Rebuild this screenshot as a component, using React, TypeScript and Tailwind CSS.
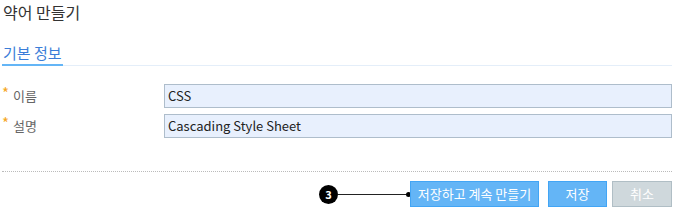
import { ReactNode } from 'react'

const font = { fontFamily: '"Noto Sans CJK KR", "Noto Sans", sans-serif' }

function Row({ label, value }: { label: string; value: string }) {
  return (
    <div className="flex items-center h-[24px]">
      <div className="w-[162px] flex items-center text-[13px] text-[#666]">
        <span className="text-[#f5a623] text-[15px] leading-none w-[11px] -mt-[7px]">*</span>
        <span>{label}</span>
      </div>
      <div className="flex-1 h-[24px] border border-[#aebdcb] bg-[#e8f0fd] flex items-center px-[3px] text-[13px] text-[#222]">
        {value}
      </div>
    </div>
  )
}

function Btn({ children, variant = 'primary', w }: { children: ReactNode; variant?: 'primary' | 'muted'; w: string }) {
  const cls =
    variant === 'primary'
      ? 'bg-[#64b5f6] border-[#42a5f5]'
      : 'bg-[#cfd8dc] border-[#b0bec5]'
  return (
    <button className={`${cls} ${w} h-[26px] border text-white text-[13px] flex items-center justify-center`}>
      {children}
    </button>
  )
}

export default function App() {
  return (
    <div className="w-[676px] h-[212px] bg-white overflow-hidden pl-[2px] pr-[4px]" style={font}>
      {/* title */}
      <h1 className="text-[16px] leading-[22px] text-[#333] pt-[1px] pl-[1px]">약어 만들기</h1>

      {/* tab */}
      <div className="mt-[19px] flex border-b border-[#e4eef9]">
        <div className="border-b-[2px] border-[#64b5f6] -mb-[1px] pb-[1px] px-[1px] text-[15px] leading-[21px] text-[#3b7dd8]">
          기본 정보
        </div>
      </div>

      {/* fields */}
      <div className="mt-[18px] flex flex-col gap-[6px]">
        <Row label="이름" value="CSS" />
        <Row label="설명" value="Cascading Style Sheet" />
      </div>

      <div className="mt-[33px] border-t border-dotted border-[#bbb]" />

      {/* actions */}
      <div className="mt-[9px] flex items-center justify-end">
        <div className="flex items-center mr-[-1px]">
          <span className="w-[19px] h-[19px] rounded-full bg-black text-white text-[11px] font-bold flex items-center justify-center">3</span>
          <span className="w-[68px] h-px bg-[#222]" />
          <span className="w-[5px] h-[5px] rounded-full bg-black" />
        </div>
        <Btn w="w-[129px]">저장하고 계속 만들기</Btn>
        <div className="w-[9px]" />
        <Btn w="w-[59px]">저장</Btn>
        <div className="w-[5px]" />
        <Btn w="w-[60px]" variant="muted">취소</Btn>
      </div>
    </div>
  )
}
